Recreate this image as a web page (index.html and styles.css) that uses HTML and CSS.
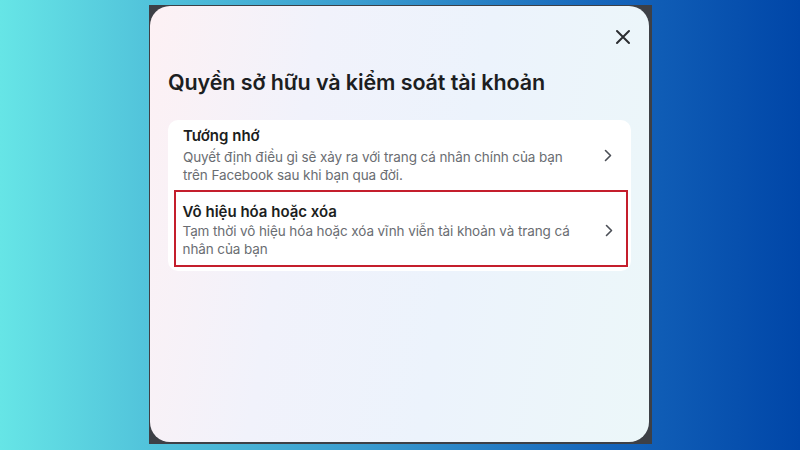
FILE: index.html
```html
<!DOCTYPE html>
<html lang="vi">
<head>
<meta charset="utf-8">
<link rel="stylesheet" href="styles.css">
</head>
<body>
<div class="frame">
  <div class="dialog">
    <div class="dialog-top">
      <button class="close" aria-label="Đóng">
        <svg width="16" height="16" viewBox="0 0 16 16"><path d="M2 2L14 14M14 2L2 14" stroke="#2b2d31" stroke-width="2" stroke-linecap="round" fill="none"/></svg>
      </button>
    </div>
    <h1 class="title">Quyền sở hữu và kiểm soát tài khoản</h1>
    <div class="list">
      <div class="item">
        <div class="item-text">
          <div class="item-title">Tướng nhớ</div>
          <div class="item-desc">Quyết định điều gì sẽ xảy ra với trang cá nhân chính của bạn trên Facebook sau khi bạn qua đời.</div>
        </div>
        <svg class="chev" width="8" height="13" viewBox="0 0 8 13"><path d="M1.5 1.5L6.5 6.5L1.5 11.5" stroke="#4b4f56" stroke-width="1.6" fill="none" stroke-linecap="round" stroke-linejoin="round"/></svg>
      </div>
      <div class="item item-marked">
        <div class="item-text">
          <div class="item-title">Vô hiệu hóa hoặc xóa</div>
          <div class="item-desc">Tạm thời vô hiệu hóa hoặc xóa vĩnh viễn tài khoản và trang cá nhân của bạn</div>
        </div>
        <svg class="chev" width="8" height="13" viewBox="0 0 8 13"><path d="M1.5 1.5L6.5 6.5L1.5 11.5" stroke="#4b4f56" stroke-width="1.6" fill="none" stroke-linecap="round" stroke-linejoin="round"/></svg>
      </div>
    </div>
  </div>
</div>
</body>
</html>
```
FILE: styles.css
```css
* { box-sizing: border-box; }
html, body { margin: 0; padding: 0; }
body {
  width: 800px;
  height: 450px;
  overflow: hidden;
  background: linear-gradient(90deg, #66e5e6 0%, #52c4db 18%, #3a9ccf 45%, #1666bb 75%, #0046a8 100%);
  font-family: Inter, "Open Sans", "Noto Sans", sans-serif;
  padding: 5px 0 0 149px;
}
.frame {
  width: 503px;
  height: 439px;
  background: #3d4046;
  padding: 1px 3px 2px 1px;
}
.dialog {
  width: 499px;
  height: 436px;
  border-radius: 20px;
  background: linear-gradient(100deg, #fdf1f4 0%, #f1f2fb 30%, #ecf3fc 60%, #ecf7f9 100%);
  padding: 18px 18px 0 18px;
}
.dialog-top {
  display: flex;
  justify-content: flex-end;
  height: 26px;
}
.close {
  width: 26px;
  height: 26px;
  margin-right: -5px;
  border: 0;
  padding: 0;
  background: transparent;
  display: flex;
  align-items: center;
  justify-content: center;
}
.title {
  margin: 19px 0 0 0;
  font-size: 21.5px;
  line-height: 26px;
  font-weight: 600;
  color: #1c1e21;
  letter-spacing: -0.1px;
}
.list {
  margin-top: 25px;
  background: #fff;
  border-radius: 10px;
  padding-bottom: 4px;
}
.item {
  display: flex;
  align-items: center;
  padding: 6px 19px 6px 15px;
}
.item-text { flex: 1; }
.item-title {
  font-size: 15px;
  line-height: 20px;
  font-weight: 600;
  color: #1c1e21;
  margin-bottom: 2px;
}
.item-marked .item-title { margin-bottom: 0; }
.item-desc {
  font-size: 13.5px;
  line-height: 18px;
  color: #6a6d72;
  letter-spacing: -0.1px;
  padding-right: 14px;
}
.chev { flex: none; }
.item-marked {
  margin: 0 3px 0 6px;
  border: 2.5px solid #c41e2c;
  padding: 10px 13px 7px 6.5px;
}
```
